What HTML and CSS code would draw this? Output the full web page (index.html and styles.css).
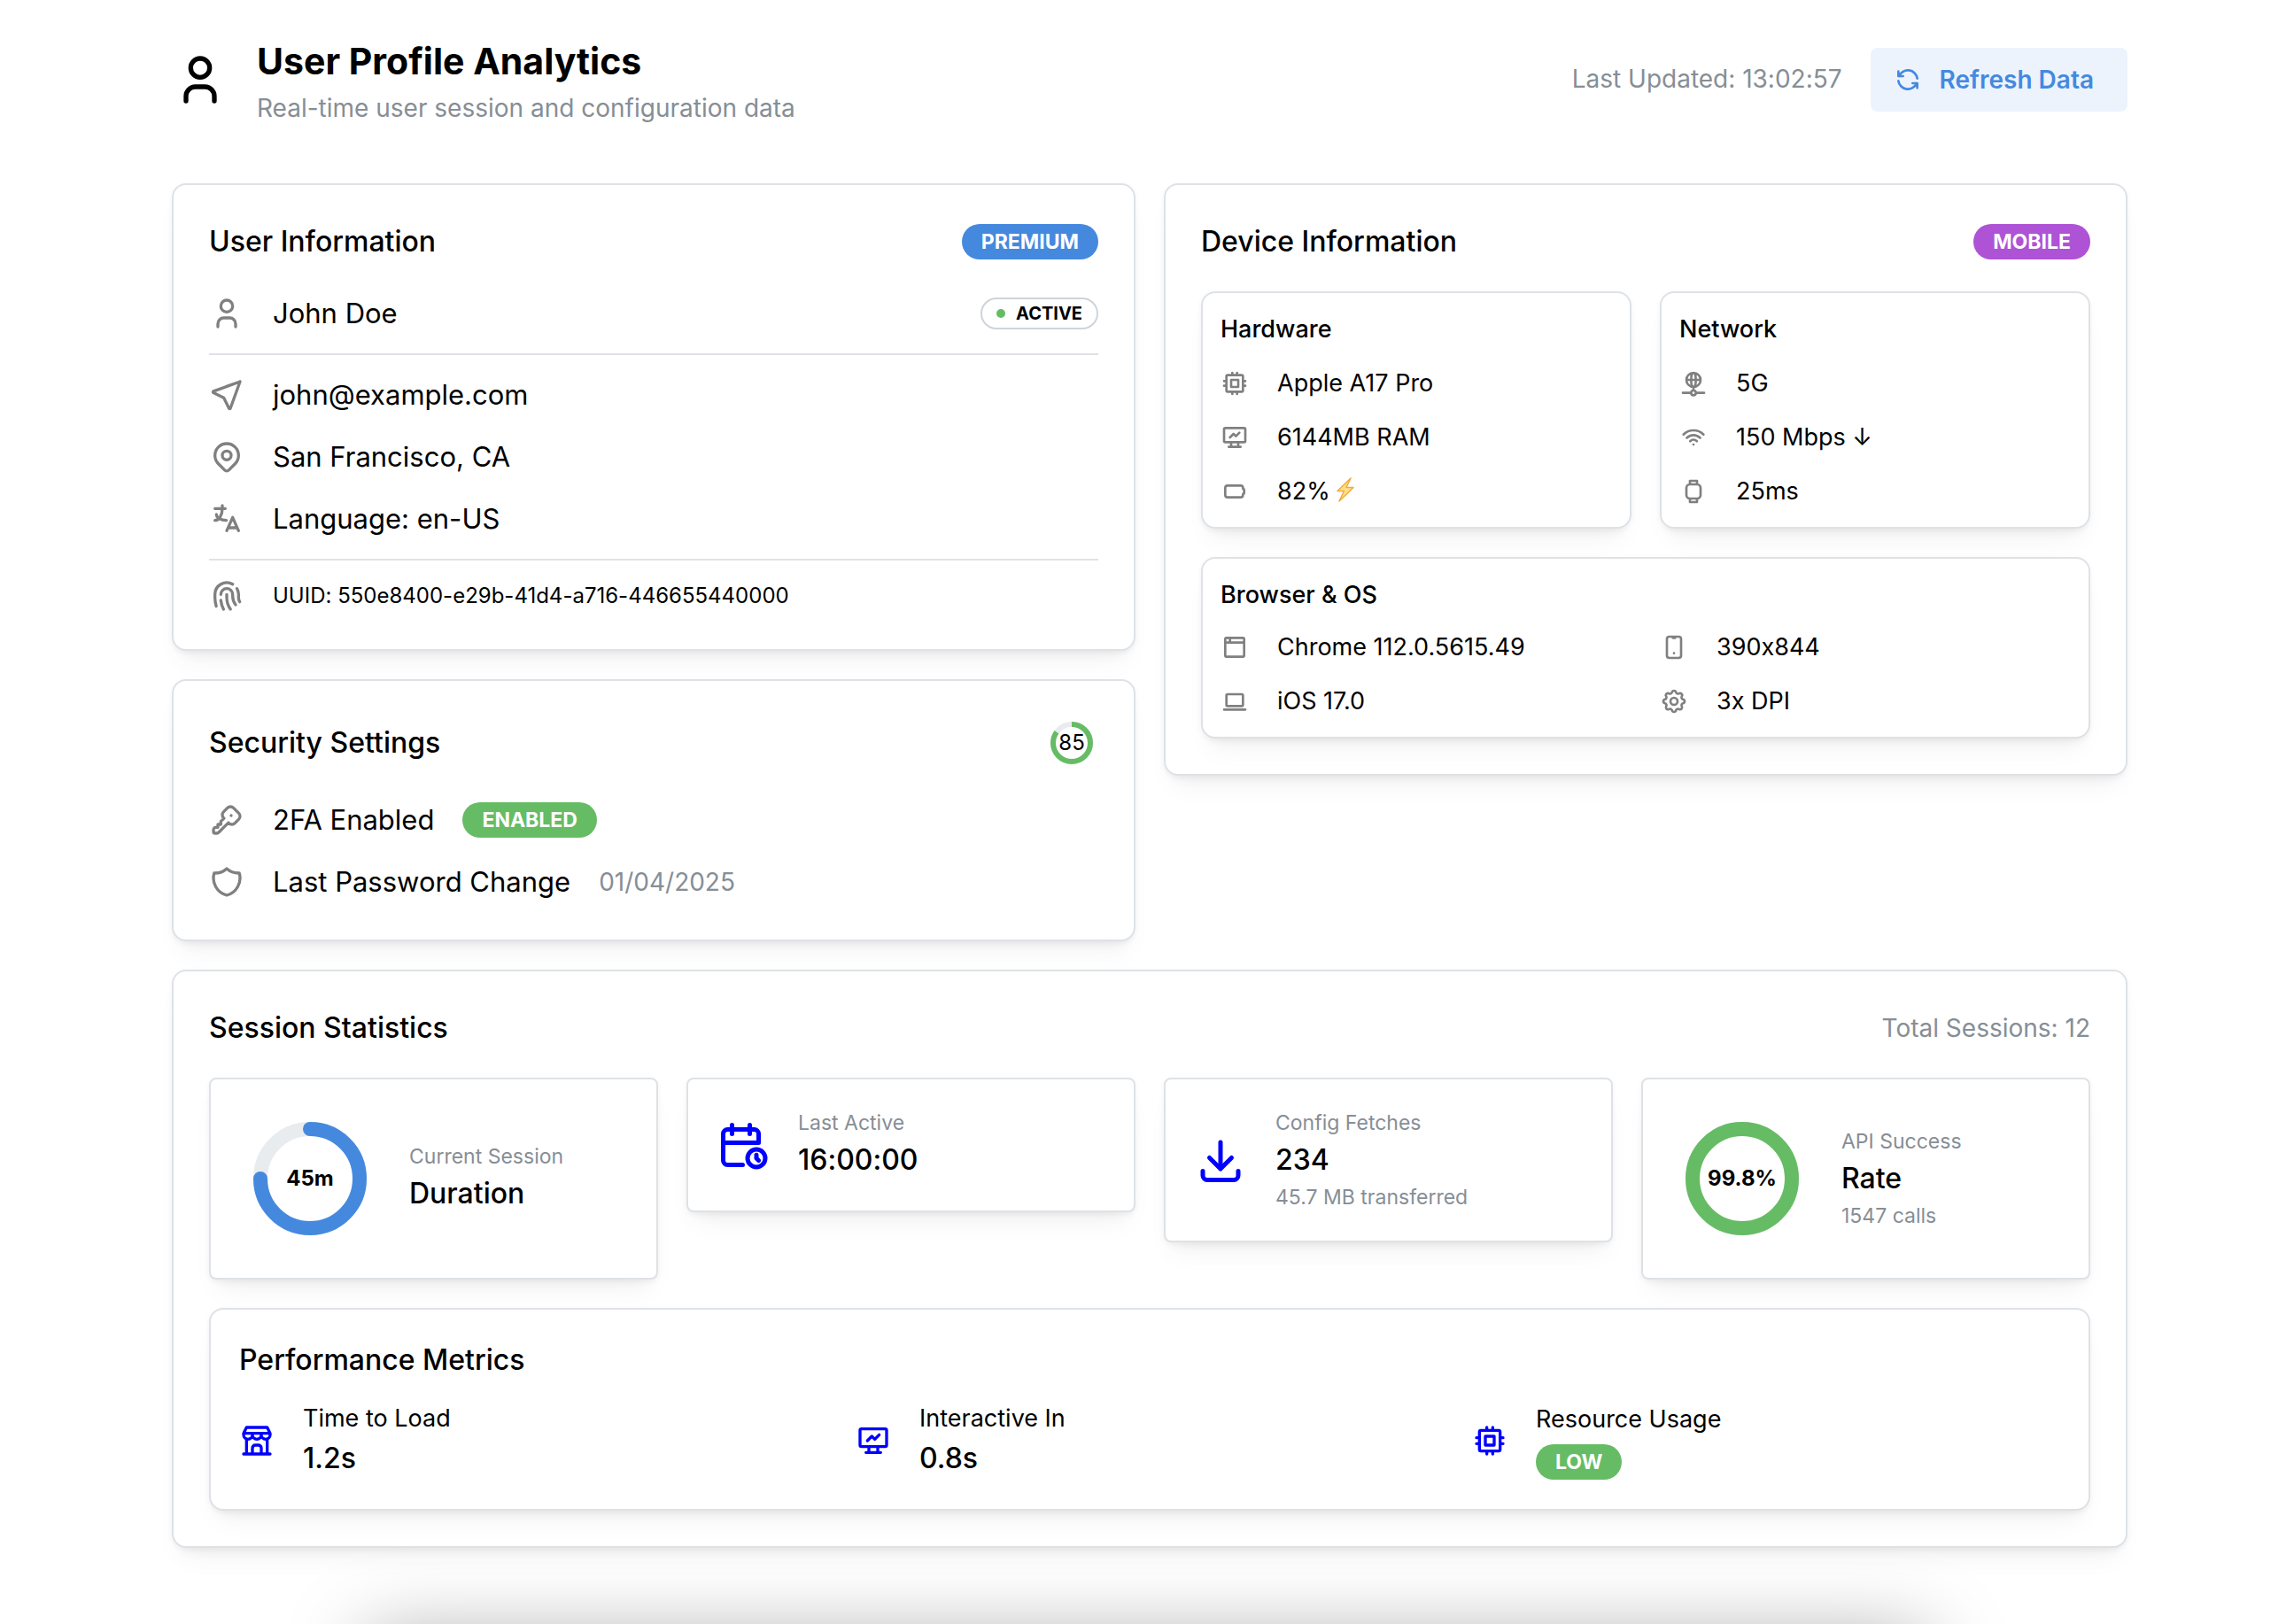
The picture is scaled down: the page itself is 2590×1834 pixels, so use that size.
FILE: index.html
```html
<!DOCTYPE html>
<html lang="en">
<head>
<meta charset="UTF-8">
<title>User Profile Analytics</title>
<link rel="stylesheet" href="styles.css">
</head>
<body>
<!-- icon sprite -->
<svg class="sprite" aria-hidden="true">
	<symbol id="i-user" viewBox="0 0 24 24"><path d="M8 7a4 4 0 1 0 8 0a4 4 0 0 0 -8 0M6 21v-2a4 4 0 0 1 4 -4h4a4 4 0 0 1 4 4v2"/></symbol>
	<symbol id="i-refresh" viewBox="0 0 24 24"><path d="M20 11a8.1 8.1 0 0 0 -15.5 -2m-.5 -4v4h4M4 13a8.1 8.1 0 0 0 15.5 2m.5 4v-4h-4"/></symbol>
	<symbol id="i-location" viewBox="0 0 24 24"><path d="M21 3l-6.5 18a.55 .55 0 0 1 -1 0l-3.5 -7l-7 -3.5a.55 .55 0 0 1 0 -1l18 -6.5"/></symbol>
	<symbol id="i-pin" viewBox="0 0 24 24"><path d="M9 11a3 3 0 1 0 6 0a3 3 0 0 0 -6 0M17.657 16.657l-4.243 4.243a2 2 0 0 1 -2.827 0l-4.244 -4.243a8 8 0 1 1 11.314 0z"/></symbol>
	<symbol id="i-language" viewBox="0 0 24 24"><path d="M4 5h7M9 3v2c0 4.418 -2.239 8 -5 8M5 9c0 2.144 2.952 3.908 6.7 4M12 20l4 -9l4 9M19.1 18h-6.2"/></symbol>
	<symbol id="i-fingerprint" viewBox="0 0 24 24"><path d="M18.9 7a8 8 0 0 1 1.1 5v1a6 6 0 0 0 .8 3M8 11a4 4 0 0 1 8 0v1a10 10 0 0 0 2 6M12 11v2a14 14 0 0 0 2.5 8M8 15a18 18 0 0 0 1.8 6M4.9 19a22 22 0 0 1 -.9 -7v-1a8 8 0 0 1 12 -6.95"/></symbol>
	<symbol id="i-key" viewBox="0 0 24 24"><path d="M16.555 3.843l3.602 3.602a2.877 2.877 0 0 1 0 4.069l-2.643 2.643a2.877 2.877 0 0 1 -4.069 0l-.301 -.301l-6.558 6.558a2 2 0 0 1 -1.239 .578l-.175 .008h-1.172a1 1 0 0 1 -.993 -.883l-.007 -.117v-1.172a2 2 0 0 1 .467 -1.284l.119 -.13l.414 -.414h2v-2h2v-2l2.144 -2.144l-.301 -.301a2.877 2.877 0 0 1 0 -4.069l2.643 -2.643a2.877 2.877 0 0 1 4.069 0zM15 9h.01"/></symbol>
	<symbol id="i-shield" viewBox="0 0 24 24"><path d="M12 3a12 12 0 0 0 8.5 3a12 12 0 0 1 -8.5 15a12 12 0 0 1 -8.5 -15a12 12 0 0 0 8.5 -3"/></symbol>
	<symbol id="i-cpu" viewBox="0 0 24 24"><path d="M5 6a1 1 0 0 1 1 -1h12a1 1 0 0 1 1 1v12a1 1 0 0 1 -1 1h-12a1 1 0 0 1 -1 -1zM9 9h6v6h-6zM3 10h2M3 14h2M10 3v2M14 3v2M21 10h-2M21 14h-2M14 21v-2M10 21v-2"/></symbol>
	<symbol id="i-monitor" viewBox="0 0 24 24"><path d="M3 5a1 1 0 0 1 1 -1h16a1 1 0 0 1 1 1v10a1 1 0 0 1 -1 1h-16a1 1 0 0 1 -1 -1zM7 20h10M9 16v4M15 16v4M8 12l3 -3l2 2l3 -3"/></symbol>
	<symbol id="i-battery" viewBox="0 0 24 24"><path d="M6 7h11a2 2 0 0 1 2 2v.5a.5 .5 0 0 0 .5 .5a.5 .5 0 0 1 .5 .5v3a.5 .5 0 0 1 -.5 .5a.5 .5 0 0 0 -.5 .5v.5a2 2 0 0 1 -2 2h-11a2 2 0 0 1 -2 -2v-6a2 2 0 0 1 2 -2"/></symbol>
	<symbol id="i-network" viewBox="0 0 24 24"><path d="M6 9a6 6 0 1 0 12 0a6 6 0 0 0 -12 0M12 3c1.333 .333 2 2.333 2 6s-.667 5.667 -2 6M12 3c-1.333 .333 -2 2.333 -2 6s.667 5.667 2 6M6 9h12M3 20h7M14 20h7M10 20a2 2 0 1 0 4 0a2 2 0 0 0 -4 0M12 15v3"/></symbol>
	<symbol id="i-wifi" viewBox="0 0 24 24"><path d="M12 18l.01 0M9.172 15.172a4 4 0 0 1 5.656 0M6.343 12.343a8 8 0 0 1 11.314 0M3.515 9.515c4.686 -4.687 12.284 -4.687 17 0"/></symbol>
	<symbol id="i-watch" viewBox="0 0 24 24"><path d="M6 9a3 3 0 0 1 3 -3h6a3 3 0 0 1 3 3v6a3 3 0 0 1 -3 3h-6a3 3 0 0 1 -3 -3zM9 18v3h6v-3M9 6v-3h6v3"/></symbol>
	<symbol id="i-browser" viewBox="0 0 24 24"><path d="M4 5a1 1 0 0 1 1 -1h14a1 1 0 0 1 1 1v14a1 1 0 0 1 -1 1h-14a1 1 0 0 1 -1 -1zM4 8h16M8 4v4"/></symbol>
	<symbol id="i-laptop" viewBox="0 0 24 24"><path d="M3 19h18M5 7a1 1 0 0 1 1 -1h12a1 1 0 0 1 1 1v8a1 1 0 0 1 -1 1h-12a1 1 0 0 1 -1 -1z"/></symbol>
	<symbol id="i-mobile" viewBox="0 0 24 24"><path d="M6 5a2 2 0 0 1 2 -2h8a2 2 0 0 1 2 2v14a2 2 0 0 1 -2 2h-8a2 2 0 0 1 -2 -2zM11 4h2M12 17v.01"/></symbol>
	<symbol id="i-settings" viewBox="0 0 24 24"><path d="M10.325 4.317c.426 -1.756 2.924 -1.756 3.35 0a1.724 1.724 0 0 0 2.573 1.066c1.543 -.94 3.31 .826 2.37 2.37a1.724 1.724 0 0 0 1.065 2.572c1.756 .426 1.756 2.924 0 3.35a1.724 1.724 0 0 0 -1.066 2.573c.94 1.543 -.826 3.31 -2.37 2.37a1.724 1.724 0 0 0 -2.572 1.065c-.426 1.756 -2.924 1.756 -3.35 0a1.724 1.724 0 0 0 -2.573 -1.066c-1.543 .94 -3.31 -.826 -2.37 -2.37a1.724 1.724 0 0 0 -1.065 -2.572c-1.756 -.426 -1.756 -2.924 0 -3.35a1.724 1.724 0 0 0 1.066 -2.573c-.94 -1.543 .826 -3.31 2.37 -2.37c1 .608 2.296 .07 2.572 -1.065zM9 12a3 3 0 1 0 6 0a3 3 0 0 0 -6 0"/></symbol>
	<symbol id="i-calendar" viewBox="0 0 24 24"><path d="M11.795 21h-6.795a2 2 0 0 1 -2 -2v-12a2 2 0 0 1 2 -2h12a2 2 0 0 1 2 2v4M14 18a4 4 0 1 0 8 0a4 4 0 1 0 -8 0M15 3v4M7 3v4M3 11h16M18 16.496v1.504l1 1"/></symbol>
	<symbol id="i-download" viewBox="0 0 24 24"><path d="M4 17v2a2 2 0 0 0 2 2h12a2 2 0 0 0 2 -2v-2M7 11l5 5l5 -5M12 4v12"/></symbol>
	<symbol id="i-store" viewBox="0 0 24 24"><path d="M3 21h18M3 7v1a3 3 0 0 0 6 0v-1m0 1a3 3 0 0 0 6 0v-1m0 1a3 3 0 0 0 6 0v-1h-18l2 -4h14l2 4M5 21v-10.15M19 21v-10.15M9 21v-4a2 2 0 0 1 2 -2h2a2 2 0 0 1 2 2v4"/></symbol>
</svg>

<main class="page">
	<header class="page-header">
		<svg class="icon icon-hero"><use href="#i-user"/></svg>
		<div class="page-heading">
			<h1>User Profile Analytics</h1>
			<p class="dimmed">Real-time user session and configuration data</p>
		</div>
		<span class="dimmed">Last Updated: 13:02:57</span>
		<button type="button" class="refresh-btn">
			<svg class="icon icon-btn"><use href="#i-refresh"/></svg>
			Refresh Data
		</button>
	</header>

	<div class="columns">
		<div class="column">
			<section class="card">
				<div class="card-head">
					<h2>User Information</h2>
					<span class="badge blue">PREMIUM</span>
				</div>
				<div class="stack">
					<div class="row">
						<svg class="icon"><use href="#i-user"/></svg>
						<span>John Doe</span>
						<span class="badge-dot">ACTIVE</span>
					</div>
					<hr>
					<div class="row"><svg class="icon"><use href="#i-location"/></svg><span>john@example.com</span></div>
					<div class="row"><svg class="icon"><use href="#i-pin"/></svg><span>San Francisco, CA</span></div>
					<div class="row"><svg class="icon"><use href="#i-language"/></svg><span>Language: en-US</span></div>
					<hr>
					<div class="row uuid"><svg class="icon"><use href="#i-fingerprint"/></svg><span>UUID: 550e8400-e29b-41d4-a716-446655440000</span></div>
				</div>
			</section>

			<section class="card">
				<div class="card-head">
					<h2>Security Settings</h2>
					<div class="ring ring-sm">
						<svg viewBox="0 0 60 60">
							<circle class="track" cx="30" cy="30" r="21"/>
							<circle class="value green-line" cx="30" cy="30" r="21" pathLength="100" stroke-dasharray="85 100"/>
						</svg>
						<span>85</span>
					</div>
				</div>
				<div class="stack">
					<div class="row"><svg class="icon"><use href="#i-key"/></svg><span>2FA Enabled</span><span class="badge green">ENABLED</span></div>
					<div class="row"><svg class="icon"><use href="#i-shield"/></svg><span>Last Password Change</span><span class="dimmed">01/04/2025</span></div>
				</div>
			</section>
		</div>

		<div class="column">
			<section class="card">
				<div class="card-head">
					<h2>Device Information</h2>
					<span class="badge purple">MOBILE</span>
				</div>
				<div class="device-grid">
					<div class="subcard">
						<h3>Hardware</h3>
						<div class="row small"><svg class="icon"><use href="#i-cpu"/></svg><span>Apple A17 Pro</span></div>
						<div class="row small"><svg class="icon"><use href="#i-monitor"/></svg><span>6144MB RAM</span></div>
						<div class="row small">
							<svg class="icon"><use href="#i-battery"/></svg>
							<span>82% <svg class="bolt" viewBox="0 0 20 28"><path d="M16 1L1 15.500h7.500L3 27L19 11.500h-8z"/></svg></span>
						</div>
					</div>
					<div class="subcard">
						<h3>Network</h3>
						<div class="row small"><svg class="icon"><use href="#i-network"/></svg><span>5G</span></div>
						<div class="row small"><svg class="icon"><use href="#i-wifi"/></svg><span>150 Mbps ↓</span></div>
						<div class="row small"><svg class="icon"><use href="#i-watch"/></svg><span>25ms</span></div>
					</div>
					<div class="subcard wide">
						<h3>Browser &amp; OS</h3>
						<div class="os-grid">
							<div class="row small"><svg class="icon"><use href="#i-browser"/></svg><span>Chrome 112.0.5615.49</span></div>
							<div class="row small"><svg class="icon"><use href="#i-mobile"/></svg><span>390x844</span></div>
							<div class="row small"><svg class="icon"><use href="#i-laptop"/></svg><span>iOS 17.0</span></div>
							<div class="row small"><svg class="icon"><use href="#i-settings"/></svg><span>3x DPI</span></div>
						</div>
					</div>
				</div>
			</section>
		</div>
	</div>

	<section class="card">
		<div class="card-head">
			<h2>Session Statistics</h2>
			<span class="dimmed">Total Sessions: 12</span>
		</div>
		<div class="stats">
			<div class="stat">
				<div class="ring">
					<svg viewBox="0 0 160 160">
						<circle class="track" cx="80" cy="80" r="56"/>
						<circle class="value blue-line" cx="80" cy="80" r="56" pathLength="100" stroke-dasharray="75 100"/>
					</svg>
					<span>45m</span>
				</div>
				<div>
					<p class="stat-label">Current Session</p>
					<p class="stat-value">Duration</p>
				</div>
			</div>
			<div class="stat">
				<svg class="icon"><use href="#i-calendar"/></svg>
				<div>
					<p class="stat-label">Last Active</p>
					<p class="stat-value">16:00:00</p>
				</div>
			</div>
			<div class="stat">
				<svg class="icon"><use href="#i-download"/></svg>
				<div>
					<p class="stat-label">Config Fetches</p>
					<p class="stat-value">234</p>
					<p class="stat-label">45.7 MB transferred</p>
				</div>
			</div>
			<div class="stat">
				<div class="ring">
					<svg viewBox="0 0 160 160">
						<circle class="track" cx="80" cy="80" r="56"/>
						<circle class="value green-line" cx="80" cy="80" r="56" pathLength="100" stroke-dasharray="99.8 100"/>
					</svg>
					<span>99.8%</span>
				</div>
				<div>
					<p class="stat-label">API Success</p>
					<p class="stat-value">Rate</p>
					<p class="stat-label">1547 calls</p>
				</div>
			</div>
		</div>
		<div class="perf">
			<h2>Performance Metrics</h2>
			<div class="perf-grid">
				<div class="metric">
					<svg class="icon"><use href="#i-store"/></svg>
					<div>
						<p>Time to Load</p>
						<p class="stat-value">1.2s</p>
					</div>
				</div>
				<div class="metric">
					<svg class="icon"><use href="#i-monitor"/></svg>
					<div>
						<p>Interactive In</p>
						<p class="stat-value">0.8s</p>
					</div>
				</div>
				<div class="metric">
					<svg class="icon"><use href="#i-cpu"/></svg>
					<div>
						<p>Resource Usage</p>
						<span class="badge green">LOW</span>
					</div>
				</div>
			</div>
		</div>
	</section>
</main>
<div class="dock"></div>
</body>
</html>
```
FILE: styles.css
```css
* {
	box-sizing: border-box;
}

body {
	margin: 0;
	background: #fff;
	color: #000;
	font-family: Inter, "Liberation Sans", sans-serif;
	font-size: 32px;
	font-feature-settings: "calt" 0;
	line-height: 50px;
}

h1, h2, h3, p {
	margin: 0;
}

.sprite {
	display: none;
}

.page {
	display: flex;
	flex-direction: column;
	gap: 32px;
	padding: 36px 188px 64px 194px;
}

/* header */
.page-header {
	display: flex;
	align-items: center;
	gap: 32px;
	margin-bottom: 32px;
}

.page-heading {
	flex: 1;
}

h1 {
	font-size: 41px;
	font-weight: 700;
	line-height: 66px;
}

h2 {
	font-size: 32px;
	font-weight: 500;
	line-height: 48px;
}

h3 {
	font-size: 27px;
	font-weight: 500;
	line-height: 41px;
}

.dimmed {
	color: #868e96;
	font-size: 28px;
	line-height: 41px;
}

.refresh-btn {
	display: flex;
	align-items: center;
	gap: 20px;
	height: 72px;
	padding: 0 38px 0 26px;
	border: 0;
	border-radius: 8px;
	background: #ecf3fd;
	color: #4589df;
	font-family: inherit;
	font-size: 28px;
	font-weight: 600;
	cursor: pointer;
}

/* icons */
.icon {
	flex: none;
	width: 40px;
	height: 40px;
	fill: none;
	stroke: #808080;
	stroke-width: 2;
	stroke-linecap: round;
	stroke-linejoin: round;
}

.icon-hero {
	width: 64px;
	height: 64px;
	stroke: #000;
}

.icon-btn {
	width: 32px;
	height: 32px;
	stroke: #4589df;
}

.bolt {
	width: 20px;
	height: 28px;
	vertical-align: -3px;
	fill: #ffe08a;
	stroke: #f5a93c;
	stroke-width: 1.5;
	stroke-linejoin: round;
}

/* cards */
.columns {
	display: grid;
	grid-template-columns: 1fr 1fr;
	gap: 32px;
	align-items: start;
}

.column {
	display: flex;
	flex-direction: column;
	gap: 32px;
}

.card, .subcard, .stat, .perf {
	background: #fff;
	border: 2px solid #dee2e6;
	border-radius: 16px;
	box-shadow: 0 2px 6px rgba(0, 0, 0, 0.05), 0 20px 30px -10px rgba(0, 0, 0, 0.05), 0 14px 14px -10px rgba(0, 0, 0, 0.04);
}

.card {
	padding: 40px;
}

.card-head {
	display: flex;
	align-items: center;
	justify-content: space-between;
	margin-bottom: 32px;
}

.stack {
	display: flex;
	flex-direction: column;
	gap: 20px;
}

hr {
	width: 100%;
	height: 2px;
	margin: 0;
	border: 0;
	background: #dee2e6;
}

.row {
	display: flex;
	align-items: center;
	gap: 32px;
	font-size: 31px;
}

.row.uuid {
	font-size: 24px;
	line-height: 40px;
}

.row.small {
	font-size: 27px;
	line-height: 41px;
}

.row.small .icon {
	width: 32px;
	height: 32px;
}

/* badges */
.badge {
	display: inline-flex;
	align-items: center;
	height: 40px;
	padding: 0 22px;
	border-radius: 20px;
	color: #fff;
	font-size: 23px;
	font-weight: 700;
	line-height: 40px;
}

.blue {
	background: #4589df;
}

.green {
	background: #66bc64;
}

.purple {
	background: #ae52d6;
}

.badge-dot {
	display: inline-flex;
	align-items: center;
	gap: 12px;
	height: 36px;
	margin-left: auto;
	padding: 0 16px;
	border: 2px solid #ced4da;
	border-radius: 18px;
	font-size: 20px;
	font-weight: 700;
	line-height: 32px;
}

.badge-dot::before {
	content: "";
	width: 10px;
	height: 10px;
	border-radius: 50%;
	background: #66bc64;
}

/* device */
.device-grid {
	display: grid;
	grid-template-columns: 1fr 1fr;
	gap: 32px;
}

.subcard {
	display: flex;
	flex-direction: column;
	gap: 20px;
	padding: 20px;
}

.subcard.wide {
	grid-column: span 2;
	gap: 18px;
}

.os-grid {
	display: grid;
	grid-template-columns: 1fr 1fr;
	gap: 20px 32px;
}

/* ring progress */
.ring {
	display: grid;
	flex: none;
	place-items: center;
	width: 160px;
	height: 160px;
	font-size: 24px;
	font-weight: 700;
}

.ring > * {
	grid-area: 1 / 1;
}

.ring svg {
	width: 100%;
	height: 100%;
	fill: none;
	stroke-width: 16;
	stroke-linecap: round;
	transform: rotate(-90deg);
}

.ring .track {
	stroke: #e9ecef;
}

.ring .blue-line {
	stroke: #4589df;
}

.ring .green-line {
	stroke: #66bc64;
}

.ring-sm {
	width: 60px;
	height: 60px;
	font-weight: 400;
}

.ring-sm svg {
	stroke-width: 6;
	stroke-linecap: butt;
}

/* session statistics */
.stats {
	display: grid;
	grid-template-columns: repeat(4, 1fr);
	gap: 32px;
	align-items: start;
	margin-bottom: 32px;
}

.stat {
	display: flex;
	align-items: center;
	gap: 32px;
	padding: 32px;
	border-radius: 8px;
}

.stat .icon {
	width: 60px;
	height: 60px;
	stroke: #00f;
}

.stat-label {
	color: #868e96;
	font-size: 23px;
	line-height: 34px;
}

.metric .stat-value, .stat-value {
	font-size: 32px;
	font-weight: 500;
	line-height: 50px;
}

.perf {
	padding: 32px;
}

.perf h2 {
	line-height: 50px;
}

.perf-grid {
	display: grid;
	grid-template-columns: repeat(3, 1fr);
	gap: 32px;
	margin-top: 20px;
}

.metric {
	display: flex;
	align-items: center;
	gap: 32px;
}

.metric p {
	font-size: 27px;
	line-height: 41px;
}

.metric .icon {
	stroke: #00f;
}

.metric .badge {
	display: flex;
	width: fit-content;
	margin-top: 8px;
}

/* panel docked under the bottom edge, only its shadow shows */
.dock {
	position: fixed;
	top: 100%;
	left: 16%;
	width: 68%;
	height: 120px;
	margin-top: 16px;
	box-shadow: 0 0 90px rgba(0, 0, 0, 0.35);
}
```
